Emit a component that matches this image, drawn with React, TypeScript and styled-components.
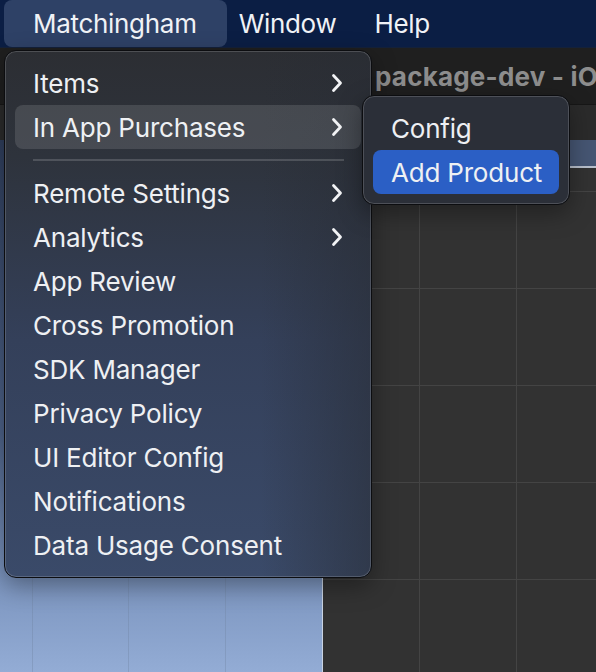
import React from "react";
import styled, { createGlobalStyle } from "styled-components";

const Global = createGlobalStyle`
  html, body { margin: 0; padding: 0; background: #1e1e1e; }
  * { box-sizing: border-box; }
`;

const FONT = `"Inter", "Noto Sans", "Liberation Sans", sans-serif`;

const Screen = styled.div`
  position: relative;
  width: 596px;
  height: 672px;
  overflow: hidden;
  display: flex;
  flex-direction: column;
  font-family: ${FONT};
`;

const MenuBar = styled.div`
  height: 48px;
  flex: none;
  display: flex;
  align-items: center;
  padding: 0 4px;
  background: #0b1e44;
  border-bottom: 1px solid #14213a;
`;

const BarItem = styled.div<{ $active?: boolean; $gap: number }>`
  height: 47px;
  display: flex;
  align-items: center;
  padding: ${(p) => (p.$active ? "0 30px 0 29px" : "0")};
  margin-right: ${(p) => p.$gap}px;
  border-radius: 8px;
  background: ${(p) => (p.$active ? "#2e4166" : "transparent")};
  color: #f0f2f6;
  font-size: 26px;
  letter-spacing: -0.3px;
`;

const TitleBar = styled.div`
  height: 56px;
  flex: none;
  display: flex;
  align-items: center;
  padding-left: 375px;
  background: #1f1f1f;
  color: #8d8d8d;
  font-size: 26px;
  font-weight: 700;
  white-space: nowrap;
  letter-spacing: 0.2px;
`;

const Toolbar = styled.div`
  height: 36px;
  flex: none;
  background: #2b2b2b;
  border-top: 1px solid #171717;
`;

const Body = styled.div`
  flex: 1;
  display: grid;
  grid-template-columns: 323px 1fr;
  min-height: 0;
`;

const GamePanel = styled.div`
  background:
    linear-gradient(90deg, transparent 32px, rgba(110, 130, 160, 0.35) 32px, rgba(110, 130, 160, 0.35) 33px, transparent 33px,
      transparent 128px, rgba(110, 130, 160, 0.35) 128px, rgba(110, 130, 160, 0.35) 129px, transparent 129px,
      transparent 225px, rgba(110, 130, 160, 0.35) 225px, rgba(110, 130, 160, 0.35) 226px, transparent 226px),
    linear-gradient(180deg, #2f3e5c 0%, #4d6288 55%, #7891bb 80%, #93acd5 100%);
  border-right: 1px solid #c9d3e2;
`;

const ScenePanel = styled.div`
  display: flex;
  flex-direction: column;
  background: #2d2d2d;
`;

const SceneHeader = styled.div`
  height: 28px;
  flex: none;
  background: #465673;
  border-bottom: 2px solid #b9c0cc;
`;

const SceneGrid = styled.div`
  flex: 1;
  background-color: #323232;
  background-image:
    linear-gradient(90deg, #444 1px, transparent 1px),
    linear-gradient(180deg, #444 1px, transparent 1px);
  background-size: 97px 97px;
  background-position: 96px 120px;
`;

const Menu = styled.div<{ $x: number; $y: number; $w: number }>`
  position: absolute;
  left: ${(p) => p.$x}px;
  top: ${(p) => p.$y}px;
  width: ${(p) => p.$w}px;
  padding: 10px;
  border-radius: 12px;
  border: 1px solid #0c0d10;
  box-shadow: inset 0 0 0 1px rgba(255, 255, 255, 0.16), 0 8px 24px rgba(0, 0, 0, 0.35);
  display: flex;
  flex-direction: column;
`;

const MainMenu = styled(Menu)`
  background:
    linear-gradient(90deg, rgba(40, 44, 52, 0) 70%, rgba(40, 44, 52, 0.55) 100%),
    linear-gradient(180deg, #2c2e33 0%, #2e333c 20%, #34405a 55%, #3a4a69 100%);
`;

const SubMenu = styled(Menu)`
  background: #2b2f38;
`;

const Item = styled.div<{ $hl?: "grey" | "blue" }>`
  height: 44px;
  display: flex;
  align-items: center;
  justify-content: space-between;
  padding: 0 18px 0 18px;
  border-radius: 8px;
  color: #eef0f3;
  font-size: 26px;
  letter-spacing: -0.2px;
  white-space: nowrap;
  background: ${(p) =>
    p.$hl === "grey" ? "rgba(255,255,255,0.12)" : p.$hl === "blue" ? "#2b5fc5" : "transparent"};
`;

const Separator = styled.div`
  height: 2px;
  margin: 10px 17px 10px 18px;
  background: rgba(255, 255, 255, 0.16);
`;

const Chevron = () => (
  <svg width="12" height="20" viewBox="0 0 12 20" fill="none">
    <path d="M2.5 2.5 L9.5 10 L2.5 17.5" stroke="#f2f3f5" strokeWidth="2.8" strokeLinecap="round" strokeLinejoin="round" />
  </svg>
);

type Entry = { label: string; sub?: boolean; hl?: "grey" | "blue" } | "sep";

const mainItems: Entry[] = [
  { label: "Items", sub: true },
  { label: "In App Purchases", sub: true, hl: "grey" },
  "sep",
  { label: "Remote Settings", sub: true },
  { label: "Analytics", sub: true },
  { label: "App Review" },
  { label: "Cross Promotion" },
  { label: "SDK Manager" },
  { label: "Privacy Policy" },
  { label: "UI Editor Config" },
  { label: "Notifications" },
  { label: "Data Usage Consent" },
];

export default function App() {
  return (
    <>
      <Global />
      <Screen>
        <MenuBar>
          <BarItem $active $gap={12}>Matchingham</BarItem>
          <BarItem $gap={38}>Window</BarItem>
          <BarItem $gap={0}>Help</BarItem>
        </MenuBar>
        <TitleBar>package-dev - iOS</TitleBar>
        <Toolbar />
        <Body>
          <GamePanel />
          <ScenePanel>
            <SceneHeader />
            <SceneGrid />
          </ScenePanel>
        </Body>

        <MainMenu $x={4} $y={50} $w={368}>
          {mainItems.map((e, i) =>
            e === "sep" ? (
              <Separator key={i} />
            ) : (
              <Item key={i} $hl={e.hl}>
                <span>{e.label}</span>
                {e.sub && <Chevron />}
              </Item>
            )
          )}
        </MainMenu>

        <SubMenu $x={362} $y={95} $w={208}>
          <Item>Config</Item>
          <Item $hl="blue">Add Product</Item>
        </SubMenu>
      </Screen>
    </>
  );
}
